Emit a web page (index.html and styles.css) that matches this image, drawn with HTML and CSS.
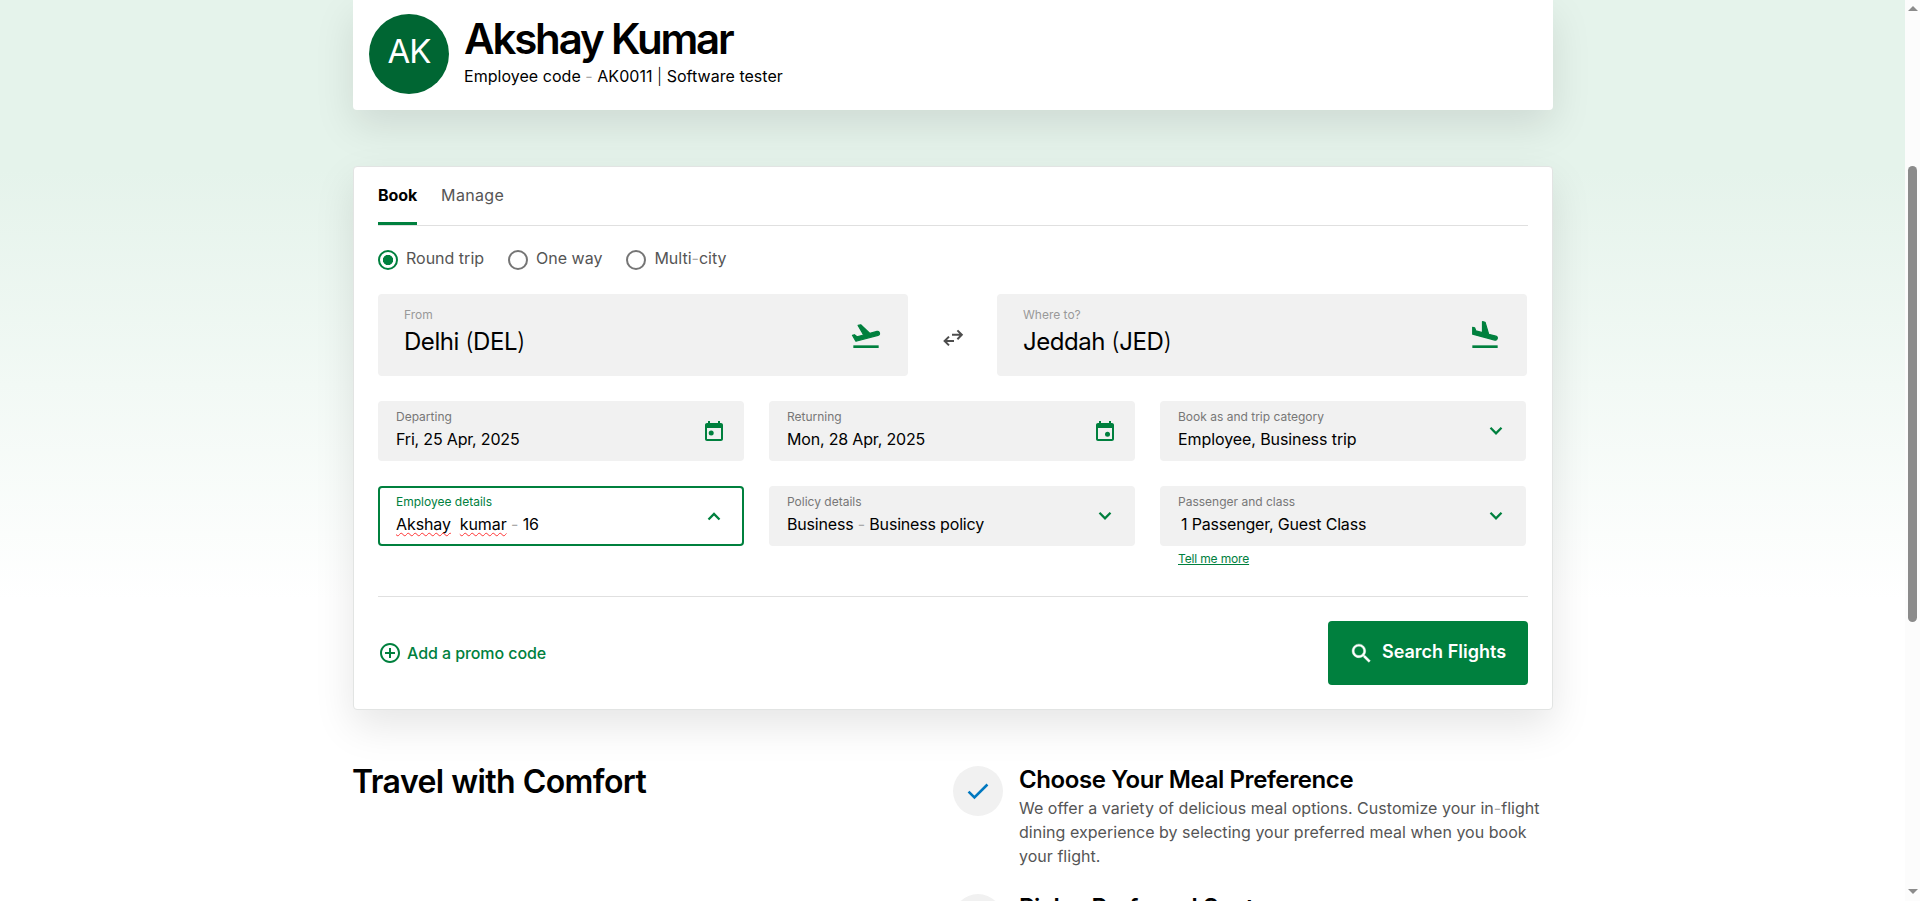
FILE: index.html
```html
<!DOCTYPE html>
<html lang="en">
<head>
<meta charset="utf-8">
<title>Book flights</title>
<link rel="stylesheet" href="styles.css">
</head>
<body>
<div class="window">
  <main class="page">
    <section class="profile">
      <div class="avatar">AK</div>
      <div class="who">
        <h1 class="name">Akshay Kumar</h1>
        <p class="role">Employee code <i>-</i> AK0011 <u>|</u> Software tester</p>
      </div>
    </section>

    <section class="booking">
      <nav class="tabs">
        <a class="tab active">Book</a>
        <a class="tab">Manage</a>
      </nav>

      <div class="radios">
        <label class="radio on"><b></b><span>Round trip</span></label>
        <label class="radio"><b></b><span>One way</span></label>
        <label class="radio"><b></b><span>Multi<i>-</i>city</span></label>
      </div>

      <div class="route">
        <div class="place">
          <div><div class="hint">From</div><div class="city">Delhi <u>(</u>DEL<u>)</u></div></div>
          <svg class="plane" viewBox="0 0 24 24"><path d="M2.5 19h19v2h-19z"/><path class="body" d="M22.07 9.64c-.21-.8-1.04-1.28-1.84-1.06L14.92 10l-6.9-6.43-1.93.51 4.14 7.17-4.97 1.33-1.97-1.54-1.45.39 1.82 3.16.77 1.33 16.57-4.43c.8-.23 1.28-1.05 1.07-1.85z"/></svg>
        </div>
        <div class="swap"><svg viewBox="0 0 24 24"><path d="M8 10.6L3.6 15 8 19.4M3.8 15H13M16.4 4.4l4.4 4.4-4.4 4.4M20.6 8.8H11"/></svg></div>
        <div class="place">
          <div><div class="hint">Where to?</div><div class="city">Jeddah <u>(</u>JED<u>)</u></div></div>
          <svg class="plane" viewBox="0 0 24 24"><path d="M2.5 19h19v2h-19z"/><path class="body" d="M19.34 15.05c.8.21 1.62-.26 1.84-1.06.21-.8-.26-1.62-1.06-1.84l-5.31-1.42-2.76-9.02L10.12 1.2v8.28L5.15 8.15l-.93-2.32-1.45-.39v5.17l16.57 4.44z"/></svg>
        </div>
      </div>

      <div class="fields">
        <div class="field">
          <div><div class="label">Departing</div><div class="value">Fri, 25 Apr, 2025</div></div>
          <svg class="cal" viewBox="0 0 24 24"><path d="M19 3h-1V1h-2v2H8V1H6v2H5c-1.11 0-1.99.9-1.99 2L3 19c0 1.1.89 2 2 2h14c1.1 0 2-.9 2-2V5c0-1.1-.9-2-2-2zm0 16H5V8h14v11z"/><circle cx="9.2" cy="12.9" r="2.5"/></svg>
        </div>
        <div class="field">
          <div><div class="label">Returning</div><div class="value">Mon, 28 Apr, 2025</div></div>
          <svg class="cal" viewBox="0 0 24 24"><path d="M19 3h-1V1h-2v2H8V1H6v2H5c-1.11 0-1.99.9-1.99 2L3 19c0 1.1.89 2 2 2h14c1.1 0 2-.9 2-2V5c0-1.1-.9-2-2-2zm0 16H5V8h14v11z"/><circle cx="14.5" cy="14.3" r="2.5"/></svg>
        </div>
        <div class="field">
          <div><div class="label">Book as and trip category</div><div class="value wide">Employee, Business trip</div></div>
          <svg class="chev" viewBox="0 0 24 24"><path d="M6.5 8.8l5.5 5.5 5.5-5.5"/></svg>
        </div>
        <div class="field open">
          <div><div class="label">Employee details</div><div class="value wide"><em>Akshay</em>&nbsp; <em>kumar</em> <i>-</i> 16</div></div>
          <svg class="chev" viewBox="0 0 24 24"><path d="M6.5 15.5L12 10l5.5 5.5"/></svg>
        </div>
        <div class="field">
          <div><div class="label">Policy details</div><div class="value">Business <i>-</i> Business policy</div></div>
          <svg class="chev" viewBox="0 0 24 24"><path d="M6.5 8.8l5.5 5.5 5.5-5.5"/></svg>
        </div>
        <div class="field">
          <div><div class="label">Passenger and class</div><div class="value indent">1 Passenger, Guest Class</div></div>
          <svg class="chev" viewBox="0 0 24 24"><path d="M6.5 8.8l5.5 5.5 5.5-5.5"/></svg>
        </div>
      </div>
      <div class="more"><a>Tell me more</a></div>

      <div class="actions">
        <a class="promo"><svg viewBox="0 0 24 24"><path d="M13 7h-2v4H7v2h4v4h2v-4h4v-2h-4V7zm-1-5C6.48 2 2 6.48 2 12s4.48 10 10 10 10-4.48 10-10S17.52 2 12 2zm0 18c-4.41 0-8-3.59-8-8s3.59-8 8-8 8 3.59 8 8-3.59 8-8 8z"/></svg><span>Add a promo code</span></a>
        <button class="search"><svg viewBox="0 0 24 24"><path d="M15.5 14h-.79l-.28-.27C15.41 12.59 16 11.11 16 9.5 16 5.91 13.09 3 9.5 3S3 5.91 3 9.5 5.91 16 9.5 16c1.61 0 3.09-.59 4.23-1.57l.27.28v.79l5 4.99L20.49 19l-4.99-5zm-6 0C7.01 14 5 11.99 5 9.5S7.01 5 9.5 5 14 7.01 14 9.5 11.99 14 9.5 14z"/></svg><span>Search Flights</span></button>
      </div>
    </section>

    <section class="comfort">
      <h2>Travel with Comfort</h2>
      <div class="perks">
        <article class="perk">
          <div class="tick"><svg viewBox="0 0 24 24"><path d="M3.3 12.6l5.4 5.4L20.7 6"/></svg></div>
          <div>
            <h3>Choose Your Meal Preference</h3>
            <p>We offer a variety of delicious meal options. Customize your in<i>-</i>flight<br>dining experience by selecting your preferred meal when you book<br>your flight.</p>
          </div>
        </article>
        <article class="perk">
          <div class="tick"><svg viewBox="0 0 24 24"><path d="M3.3 12.6l5.4 5.4L20.7 6"/></svg></div>
          <div><h3>Pick a Preferred Seat</h3></div>
        </article>
      </div>
    </section>
  </main>
  <aside class="scrollbar"><span class="up"></span><span class="thumb"></span><span class="down"></span></aside>
</div>
</body>
</html>
```

FILE: styles.css
```css
* { box-sizing: border-box; margin: 0; padding: 0; }
body { font-family: Inter, "Liberation Sans", sans-serif; font-size: 16px; color: #000; overflow: hidden; }
svg { display: block; flex: none; fill: #00803e; }
i { font-style: normal; color: #aaa; }
u { text-decoration: none; font-weight: 300; }
.window { display: flex; height: 901px; overflow: hidden; }
.page { flex: 1; padding-left: 353px; background: linear-gradient(#e5f3eb 0, #e5f3eb 170px, #fff 600px); white-space: nowrap; }

.profile { width: 1200px; height: 110px; padding: 14px 16px; display: flex; gap: 15px; background: #fff; border-radius: 0 0 4px 4px; box-shadow: 0 16px 40px rgba(0,0,0,.1); }
.avatar { width: 80px; height: 80px; border-radius: 50%; background: #006633; color: #fff; font-size: 33px; line-height: 75px; letter-spacing: -1px; text-align: center; }
.name { font-size: 42px; font-weight: 600; line-height: 49px; letter-spacing: -2.15px; }
.role { font-size: 16px; line-height: 27px; letter-spacing: .04px; }

.booking { width: 1200px; height: 544px; margin-top: 56px; padding: 0 24px; background: #fff; border: 1px solid #e2e4e3; border-radius: 4px; box-shadow: 0 16px 40px rgba(0,0,0,.1); }
.tabs { display: flex; gap: 24px; height: 59px; border-bottom: 1px solid #e0e0e0; }
.tab { height: 58px; line-height: 56px; letter-spacing: .35px; color: #555; }
.tab.active { color: #000; font-weight: 700; letter-spacing: -.1px; border-bottom: 3px solid #00803e; }
.radios { display: flex; gap: 24px; height: 68px; padding-top: 24px; color: #555; }
.radio { display: flex; gap: 8px; height: 20px; line-height: 17px; }
.radio b { width: 20px; height: 20px; border: 2px solid #757575; border-radius: 50%; }
.radio.on b { border-color: #00803e; background: radial-gradient(circle, #00803e 4.8px, #fff 5.4px); }

.route { display: flex; }
.place { width: 530px; height: 82px; padding: 14px 26px; display: flex; justify-content: space-between; background: #f1f1f1; border-radius: 4px; }
.hint { font-size: 12px; line-height: 14px; color: #999; }
.city { font-size: 24px; line-height: 40px; letter-spacing: -.45px; }
.plane { width: 32px; height: 32px; margin-top: 12px; }
.plane .body { stroke: #00803e; stroke-width: .9; stroke-linejoin: round; }
.swap { width: 89px; display: flex; justify-content: center; padding-top: 32px; }
.swap svg { width: 24px; height: 24px; fill: none; stroke: #4d4d4d; stroke-width: 2; }

.fields { display: grid; grid-template-columns: repeat(3, 366px); gap: 25px; margin-top: 25px; }
.field { height: 60px; padding: 8px 18px; display: flex; justify-content: space-between; background: #f1f1f1; border-radius: 4px; }
.label { font-size: 12px; line-height: 16px; color: #777; }
.value { line-height: 28px; letter-spacing: -.18px; }
.value.wide { letter-spacing: -.09px; }
.value.indent { padding-left: 3px; }
.cal { width: 24px; height: 24px; margin-top: 11px; }
.chev { width: 24px; height: 24px; margin-top: 10px; fill: none; stroke: #00803e; stroke-width: 2.3; }
.open { background: #fff; box-shadow: inset 0 0 0 2px #00803e; }
.open .label { color: #00803e; }
em { font-style: normal; text-decoration: underline wavy #f33 1.3px; text-decoration-skip-ink: none; text-underline-offset: 2px; }
.more { height: 50px; padding: 5px 0 0 800px; font-size: 12px; line-height: 16px; letter-spacing: -.15px; color: #00803e; }
.more a { text-decoration: underline; }

.actions { display: flex; justify-content: space-between; border-top: 1px solid #e0e0e0; padding-top: 24px; }
.promo { display: flex; gap: 5px; height: 64px; align-items: center; color: #00803e; font-weight: 500; letter-spacing: -.08px; }
.promo svg { width: 24px; height: 24px; }
.search { width: 200px; height: 64px; padding-left: 21px; display: flex; gap: 8px; align-items: center; border: 0; border-radius: 4px; background: #00803e; color: #fff; font: 600 18px Inter, sans-serif; }
.search svg { width: 25px; height: 25px; fill: #fff; stroke: #fff; stroke-width: .4; }
.search span { padding-bottom: 4px; }

.comfort { width: 1200px; display: flex; margin-top: 56px; }
h2 { width: 600px; font-size: 32px; font-weight: 600; line-height: 32px; letter-spacing: -.56px; text-indent: -1px; }
.perk { display: flex; gap: 16px; height: 128px; }
.tick { width: 50px; height: 50px; border-radius: 50%; background: #f1f1f1; display: grid; place-items: center; }
.tick svg { width: 26px; height: 26px; fill: none; stroke: #0078c0; stroke-width: 2.4; }
h3 { font-size: 24px; font-weight: 600; line-height: 28px; letter-spacing: -.4px; }
.perk p { padding-top: 2px; line-height: 24px; letter-spacing: .03px; color: #555; }

.scrollbar { width: 15px; background: #fcfcfc; display: flex; flex-direction: column; align-items: center; }
.up { margin-top: 6px; border: 5px solid transparent; border-top: 0; border-bottom-color: #8b8b8b; }
.thumb { width: 9px; height: 456px; margin: 155px 0 267px; border-radius: 5px; background: #8b8b8b; flex: none; }
.down { border: 5px solid transparent; border-bottom: 0; border-top-color: #8b8b8b; }
```
